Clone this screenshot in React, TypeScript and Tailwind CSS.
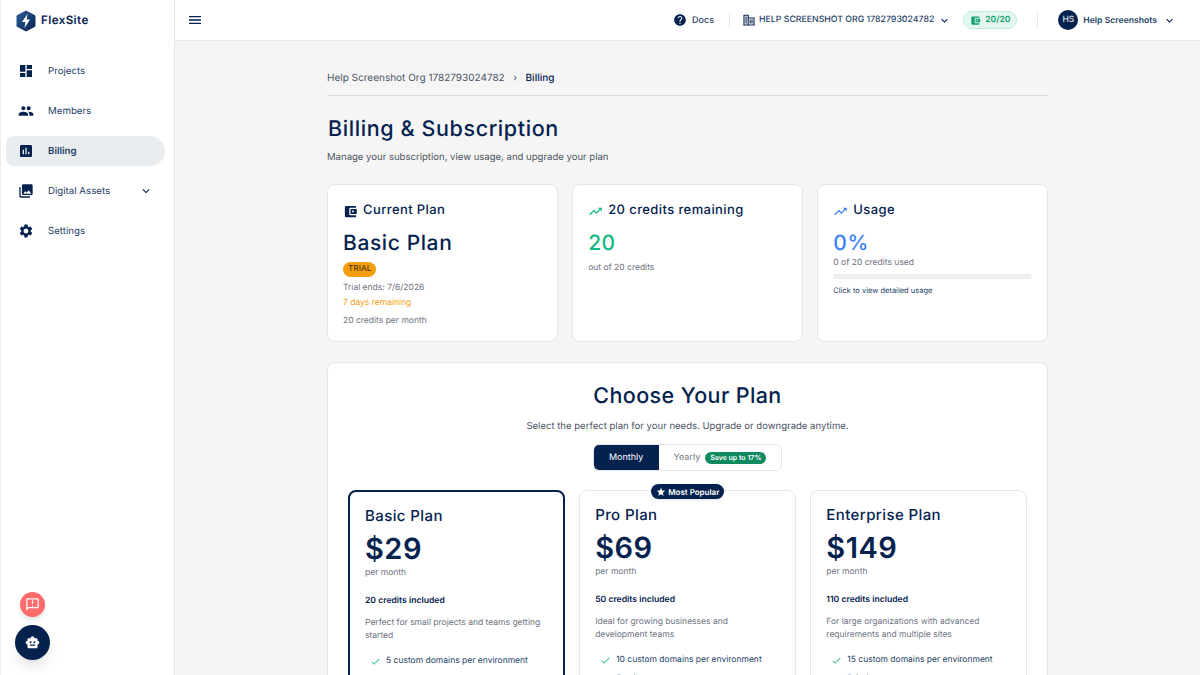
import React from "react";
import {
  MdDashboard,
  MdPeople,
  MdAssessment,
  MdPhotoLibrary,
  MdSettings,
  MdHelp,
  MdMenu,
  MdAccountBalanceWallet,
  MdTrendingUp,
  MdCheck,
  MdStar,
  MdSmartToy,
  MdOutlineAnnouncement,
  MdKeyboardArrowDown,
} from "react-icons/md";

const NAVY = "text-[#05224f]";

const navItems = [
  { label: "Projects", icon: MdDashboard },
  { label: "Members", icon: MdPeople },
  { label: "Billing", icon: MdAssessment, active: true },
  { label: "Digital Assets", icon: MdPhotoLibrary, caret: true },
  { label: "Settings", icon: MdSettings },
];

const plans = [
  {
    name: "Basic Plan",
    price: "$29",
    credits: "20 credits included",
    blurb: "Perfect for small projects and teams getting started",
    features: ["5 custom domains per environment", "3 sites"],
    selected: true,
  },
  {
    name: "Pro Plan",
    price: "$69",
    credits: "50 credits included",
    blurb: "Ideal for growing businesses and development teams",
    features: ["10 custom domains per environment", "Email support"],
    popular: true,
  },
  {
    name: "Enterprise Plan",
    price: "$149",
    credits: "110 credits included",
    blurb: "For large organizations with advanced requirements and multiple sites",
    features: ["15 custom domains per environment", "Priority support"],
  },
];

function Logo() {
  return (
    <svg width="20" height="22" viewBox="0 0 20 22">
      <defs>
        <linearGradient id="logoFill" x1="0" y1="0" x2="1" y2="1">
          <stop offset="0" stopColor="#2f5f9e" />
          <stop offset="1" stopColor="#05224f" />
        </linearGradient>
      </defs>
      <path
        d="M10 0.5 L18.6 5 Q19.5 5.5 19.5 6.5 L19.5 15.5 Q19.5 16.5 18.6 17 L10 21.5 L1.4 17 Q0.5 16.5 0.5 15.5 L0.5 6.5 Q0.5 5.5 1.4 5 Z"
        fill="url(#logoFill)"
      />
      <path d="M11.5 4 L6 12 L9.4 12 L8.5 18 L14 9.6 L10.6 9.6 Z" fill="#fff" />
    </svg>
  );
}

function BuildingIcon() {
  return (
    <svg width="12" height="12" viewBox="0 0 12 12" fill="none" stroke="#05224f" strokeWidth="1.1">
      <path d="M1 11V1.2h4.2V11M5.2 4h5.8v7M0.3 11h11.4" />
      <path d="M3.1 2.5v7M7.2 5.5v4M9 5.5v4" />
    </svg>
  );
}

function Sidebar() {
  return (
    <aside className="relative w-[175px] h-full shrink-0 bg-white border-r border-[#e5e7eb] border-l border-l-[#eeeeee]">
      <div className="flex items-center gap-[5px] pl-[15px] h-[41px]">
        <Logo />
        <span className={`text-[11.6px] font-semibold tracking-[0.4px] ${NAVY}`}>FlexSite</span>
      </div>
      <nav className="flex flex-col gap-[10px] mt-[15px] pl-[5px] pr-[9px]">
        {navItems.map((item) => {
          const Icon = item.icon;
          return (
            <div
              key={item.label}
              className={`flex items-center h-[30px] pl-[12px] rounded-l-[8px] rounded-r-[15px] ${item.active ? "bg-[#e9edf0]" : ""}`}
            >
              <Icon className={`w-[16px] h-[16px] ${NAVY}`} />
              <span className={`ml-[14px] pt-[2px] text-[9.7px] ${item.active ? "font-semibold" : "font-normal"} text-[#253f66]`}>{item.label}</span>
              {item.caret && <MdKeyboardArrowDown className={`w-[14px] h-[14px] ml-auto mr-[12px] ${NAVY}`} />}
            </div>
          );
        })}
      </nav>
      <div className="absolute left-[19px] top-[592px] w-[25px] h-[25px] rounded-full bg-[#ff6b6b] shadow-md flex items-center justify-center">
        <MdOutlineAnnouncement className="w-[15px] h-[15px] text-white" />
      </div>
      <div className="absolute left-[14px] top-[625px] w-[35px] h-[35px] rounded-full bg-[#05224f] shadow-lg flex items-center justify-center">
        <MdSmartToy className="w-[15px] h-[15px] text-white" />
      </div>
    </aside>
  );
}

function Header() {
  return (
    <header className="h-[41px] shrink-0 bg-white border-b border-[#e5e7eb] flex items-center pl-[12px] pr-[24px]">
      <MdMenu className={`w-[16px] h-[16px] ${NAVY}`} />
      <div className="ml-auto flex items-center">
        <MdHelp className={`w-[14px] h-[14px] ${NAVY}`} />
        <span className="ml-[5px] pt-[2px] text-[9px] font-medium text-[#253f66]">Docs</span>
        <div className="ml-[15px] w-px h-[15px] bg-[#e5e7eb]" />
        <div className="ml-[13px]">
          <BuildingIcon />
        </div>
        <span className="ml-[4px] pt-[2px] text-[8.75px] font-medium text-[#253f66]">HELP SCREENSHOT ORG 1782793024782</span>
        <MdKeyboardArrowDown className={`ml-[4px] w-[13px] h-[13px] ${NAVY}`} />
        <div className="ml-[12px] flex items-center gap-[4px] h-[18px] px-[6px] rounded-full bg-[#e3f7ef] border border-[#c1ebda]">
          <MdAccountBalanceWallet className="w-[11px] h-[11px] text-[#10a36f]" />
          <span className="text-[8.5px] font-semibold text-[#10a36f]">20/20</span>
        </div>
        <div className="ml-[20px] w-px h-[15px] bg-[#e5e7eb]" />
        <div className="ml-[20px] w-[20px] h-[20px] rounded-full bg-[#05224f] flex items-center justify-center text-[8.5px] text-white font-normal">HS</div>
        <span className="ml-[5px] pt-[2px] text-[8.65px] font-semibold text-[#253f66]">Help Screenshots</span>
        <MdKeyboardArrowDown className={`ml-[6px] w-[13px] h-[13px] ${NAVY}`} />
      </div>
    </header>
  );
}

function SummaryCard({ children }: { children: React.ReactNode }) {
  return <div className="h-[158px] bg-white border border-[#e5e7eb] rounded-[8px] px-[15px] pt-[16px]">{children}</div>;
}

function CardTitle({ icon, title }: { icon: React.ReactNode; title: string }) {
  return (
    <div className="flex items-center gap-[5px] h-[20px]">
      {icon}
      <span className={`text-[13px] font-medium tracking-[0.4px] ${NAVY}`}>{title}</span>
    </div>
  );
}

function PlanCard({ plan }: { plan: (typeof plans)[number] }) {
  return (
    <div
      className={`relative bg-white rounded-[8px] px-[15px] h-[260px] pt-[14px] ${plan.selected ? "border-2 border-[#05224f]" : "border border-[#e5e7eb]"}`}
    >
      {plan.popular && (
        <div className="absolute -top-[7px] left-[71px] h-[15px] px-[5px] rounded-full bg-[#05224f] shadow flex items-center gap-[2px]">
          <MdStar className="w-[10px] h-[10px] text-white" />
          <span className="text-[8px] font-semibold text-white whitespace-nowrap">Most Popular</span>
        </div>
      )}
      <div className={`text-[15px] leading-[20px] font-medium tracking-[0.4px] ${NAVY}`}>{plan.name}</div>
      <div className={`mt-[5px] text-[29px] leading-[36px] font-semibold tracking-[0.5px] ${NAVY}`}>{plan.price}</div>
      <div className="text-[8.5px] leading-[12px] text-[#6b7280]">per month</div>
      <div className={`mt-[16px] text-[8.6px] leading-[12px] font-semibold ${NAVY}`}>{plan.credits}</div>
      <div className="mt-[10px] text-[8.5px] leading-[13px] text-[#6b7280]">{plan.blurb}</div>
      <ul className="mt-[12px] flex flex-col gap-[6px]">
        {plan.features.map((f) => (
          <li key={f} className="flex items-center pl-[5px]">
            <MdCheck className="w-[11px] h-[11px] text-[#34c38f]" />
            <span className="ml-[5px] text-[8.5px] leading-[13px] text-[#253f66] whitespace-nowrap">{f}</span>
          </li>
        ))}
      </ul>
    </div>
  );
}

export default function App() {
  return (
    <div className="flex w-[1200px] h-[675px] overflow-hidden bg-[#f5f5f5] font-['Inter',sans-serif] [text-rendering:geometricPrecision]">
      <Sidebar />
      <div className="flex-1 flex flex-col min-w-0">
        <Header />
        <main className="flex-1 overflow-hidden pl-[152px] pr-[152px] pt-[28px]">
          <div className="flex items-center h-[19px] text-[10px]">
            <span className="text-[#4b5563]">Help Screenshot Org 1782793024782</span>
            <span className="mx-[8.5px] text-[#4b5563]">›</span>
            <span className={`font-medium ${NAVY}`}>Billing</span>
          </div>
          <div className="mt-[7px] border-t border-[#d9dbde]" />
          <h1 className={`mt-[20px] pl-px text-[21.5px] leading-[26px] font-medium tracking-[0.6px] ${NAVY}`}>Billing &amp; Subscription</h1>
          <p className="mt-[9px] text-[9.55px] leading-[14px] text-[#4b5563]">Manage your subscription, view usage, and upgrade your plan</p>

          <div className="mt-[19px] grid grid-cols-3 gap-[14.5px]">
            <SummaryCard>
              <CardTitle icon={<MdAccountBalanceWallet className={`w-[15px] h-[15px] ${NAVY}`} />} title="Current Plan" />
              <div className={`mt-[10px] text-[21px] leading-[26px] font-medium tracking-[0.6px] ${NAVY}`}>Basic Plan</div>
              <div className="mt-[5px] w-fit h-[15px] px-[5px] rounded-full bg-[#f59e0b] text-[8.3px] leading-[15px] text-[#3b2a06]">TRIAL</div>
              <div className="mt-[5px] text-[8.5px] leading-[13px] text-[#6b7280]">Trial ends: 7/6/2026</div>
              <div className="mt-[2px] text-[8.5px] leading-[13px] text-[#f59e0b]">7 days remaining</div>
              <div className="mt-[5px] text-[8.5px] leading-[13px] text-[#6b7280]">20 credits per month</div>
            </SummaryCard>
            <SummaryCard>
              <CardTitle icon={<MdTrendingUp className="w-[15px] h-[15px] text-[#10b981]" />} title="20 credits remaining" />
              <div className="mt-[10px] text-[21px] leading-[26px] font-medium tracking-[0.5px] text-[#10b981]">20</div>
              <div className="mt-[5px] text-[8.5px] leading-[13px] text-[#6b7280]">out of 20 credits</div>
            </SummaryCard>
            <SummaryCard>
              <CardTitle icon={<MdTrendingUp className="w-[15px] h-[15px] text-[#3b82f6]" />} title="Usage" />
              <div className="mt-[10px] text-[21px] leading-[26px] font-medium tracking-[0.5px] text-[#3b82f6]">0%</div>
              <div className="text-[8.5px] leading-[13px] text-[#6b7280]">0 of 20 credits used</div>
              <div className="mt-[4px] h-[5px] rounded-full bg-[#eeeeee]" />
              <div className="mt-[6px] text-[7.5px] leading-[12px] text-[#253f66]">Click to view detailed usage</div>
            </SummaryCard>
          </div>

          <section className="mt-[20px] bg-white border border-[#e5e7eb] rounded-[8px] px-[20px] pt-[19px] h-[400px]">
            <h2 className={`text-center text-[21.5px] leading-[28px] font-medium tracking-[0.4px] ${NAVY}`}>Choose Your Plan</h2>
            <p className="mt-[10px] text-center text-[9.55px] leading-[14px] text-[#4b5563]">Select the perfect plan for your needs. Upgrade or downgrade anytime.</p>
            <div className="mt-[10px] flex justify-center">
              <div className="flex h-[27px] rounded-[6px] border border-[#e5e7eb] overflow-hidden">
                <div className="w-[65px] bg-[#05224f] text-white text-[9px] flex items-center justify-center font-normal">Monthly</div>
                <div className="flex items-center pl-[15px] pr-[15px] gap-[5px]">
                  <span className="text-[9px] text-[#6b7280]">Yearly</span>
                  <span className="h-[12px] px-[5px] rounded-full bg-[#0f8a5f] text-white text-[7px] leading-[12px] font-semibold">Save up to 17%</span>
                </div>
              </div>
            </div>
            <div className="mt-[19px] grid grid-cols-3 gap-[14.5px]">
              {plans.map((p) => (
                <PlanCard key={p.name} plan={p} />
              ))}
            </div>
          </section>
        </main>
      </div>
    </div>
  );
}
